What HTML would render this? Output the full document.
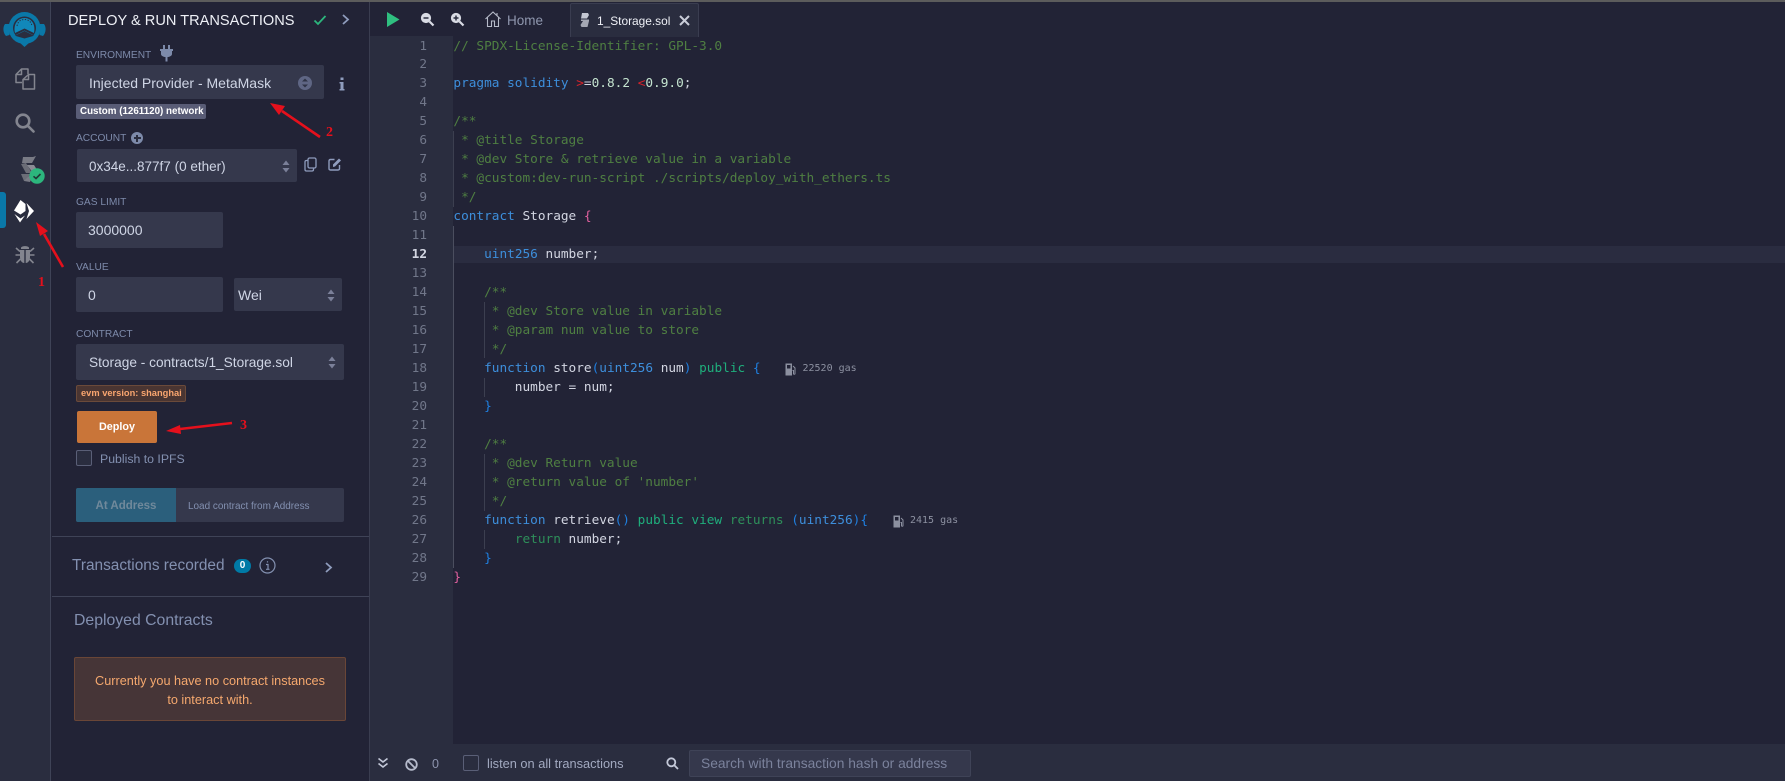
<!DOCTYPE html>
<html><head><meta charset="utf-8"><style>
html,body{margin:0;padding:0;width:1785px;height:781px;overflow:hidden;background:#222336;font-family:"Liberation Sans",sans-serif}
.a{position:absolute}
.t{position:absolute;white-space:pre;line-height:16px}
.lb{font-size:10.2px;color:#7d8aaa;left:76px}
.box{position:absolute;background:#35384c;border-radius:2px}
.v{color:#cfd5e5;font-size:14px}
#code{position:absolute;left:453.4px;top:37.5px;font:12.76px/18.97px "DejaVu Sans Mono","Liberation Mono",monospace;color:#d3d6e2}
#code div{height:18.97px;white-space:pre}
#nums{position:absolute;left:370px;width:57px;top:37.5px;text-align:right;font:12.76px/18.97px "DejaVu Sans Mono","Liberation Mono",monospace;color:#71778a}
#nums div{height:18.97px}
.c{color:#4f7f42}.k{color:#3d8edb}.g{color:#1fae7c}.r{color:#2e8f5a}.b{color:#1f7fe0}.p{color:#e0609e}.e{color:#d8232a}.n{color:#c4e3cf}
.gd{position:absolute;width:1px;background:#3c3f50}
.gas{position:absolute;font:10px/12px "DejaVu Sans Mono",monospace;color:#8c90a0;white-space:pre}
svg{position:absolute;overflow:visible}
.red{position:absolute;color:#e5101c;font:bold 14px/16px "Liberation Serif",serif}
</style></head><body>
<div class="a" style="left:0;top:0;width:1785px;height:781px;background:#222336"></div>
<!-- left icon rail -->
<div class="a" style="left:0;top:0;width:50px;height:781px;background:#2a2d3f"></div>
<div class="a" style="left:50px;top:0;width:1px;height:781px;background:#3f4357"></div>
<div class="a" style="left:369px;top:0;width:1px;height:781px;background:#3a3d50"></div>
<div class="a" style="left:370px;top:36px;width:83px;height:708px;background:#2a2d3f"></div>
<div class="a" style="left:0;top:0;width:1785px;height:1.5px;background:#5c5c5c"></div>

<!-- logo -->
<svg style="left:0;top:0" width="50" height="50" viewBox="0 0 50 50">
<path d="M5 24 C2.500 27 3 33 6 36 L9.500 35 L9 24Z" fill="#0a78a8"/>
<path d="M44 24 C46.500 27 46 33 43 36 L39.500 35 L40 24Z" fill="#0a78a8"/>
<circle cx="24.500" cy="28" r="16" fill="#0a78a8"/>
<circle cx="24.500" cy="28" r="11.500" fill="#2a2d3f"/>
<path d="M15 33 C13 24 18 18 24.500 18 C31 18 36 24 34 33 L24.500 28.500Z" fill="#1188ba"/>
<path d="M17 26 C18 21 21 19.500 24.500 19.500 C28 19.500 31 21 32 26" fill="none" stroke="#2a2d3f" stroke-width="1" stroke-dasharray="1.300 1.500"/>
<path d="M13 36.500 L24.500 30.500 L36 36.500 L24.500 47Z" fill="#0a78a8"/>
<path d="M15 35.800 L24.500 31 L34 35.800 L24.500 38.500Z" fill="#2a2d3f"/>
</svg>
<!-- files -->
<svg style="left:14px;top:67px" width="22" height="24" viewBox="0 0 22 24" fill="none" stroke="#83858f" stroke-width="1.500" stroke-linejoin="round">
<path d="M8 15.500H2 V7.500 L7.500 2 H14 V7"/><path d="M7.500 2V7.500H2"/>
<path d="M9 12.500 L14.500 7.500 H20.500 V22 H9Z"/><path d="M14.500 7.500V12.500H9"/>
</svg>
<!-- search -->
<svg style="left:15px;top:113px" width="20" height="20" viewBox="0 0 20 20" fill="none" stroke="#83858f" stroke-width="2.600">
<circle cx="8" cy="8" r="6.300"/><path d="M12.500 12.500L18.500 18.500" stroke-linecap="round"/>
</svg>
<!-- solidity -->
<svg style="left:18px;top:155px" width="30" height="32" viewBox="0 0 30 32">
<path d="M5 2H15L18 1 14 8 4 8Z" fill="#797b85"/>
<path d="M3 9 L8 18 L14 18 L8 8Z" fill="#6b6d77"/>
<path d="M9 10 H16 L21 18 L15 18Z" fill="#8a8c95"/>
<path d="M3 19 H12 L8 26 H6Z" fill="#6b6d77"/>
<path d="M6 26 L13 19 H15 L12 27 Z" fill="#797b85"/>
<circle cx="19" cy="21" r="7.700" fill="#2cb67d"/>
<path d="M15.500 21.300 L18 23.500 L22.500 19" fill="none" stroke="#1f3a36" stroke-width="1.600"/>
</svg>
<!-- active bar -->
<div class="a" style="left:0;top:192px;width:6px;height:36px;background:#0a78a8;border-radius:0 3px 3px 0"></div>
<!-- deploy icon -->
<svg style="left:0;top:0" width="50" height="240" viewBox="0 0 50 240" fill="#fff">
<path d="M20.500 200 L14 210.500 L20.500 214.500 L25.500 211 L25.500 204Z"/>
<path d="M26.500 203 L34 211 L26.500 219 L29 211Z"/>
<path d="M14.500 214 L20.500 218.500 L25 215.500 L20 222.500Z"/>
</svg>
<!-- bug -->
<svg style="left:15px;top:244px" width="20" height="21" viewBox="0 0 20 21" fill="#83858f">
<path d="M6 4 C6 1.500 14 1.500 14 4 L14 5 H6Z"/>
<path d="M5 6 H9.300 V19 C6.500 19 5 16 5 13Z M10.700 6 H15 V13 C15 16 13.500 19 10.700 19Z"/>
<path d="M1 4 L5 7.500 M19 4 L15 7.500 M0.500 11 H5 M19.500 11 H15 M1.500 19 L5.500 15 M18.500 19 L14.500 15" stroke="#83858f" stroke-width="1.600" fill="none"/>
</svg>

<!-- side panel -->
<div class="t" style="left:68px;top:13px;font-size:14.600px;color:#eef0f6">DEPLOY &amp; RUN TRANSACTIONS</div>
<svg style="left:313px;top:14px" width="14" height="12" viewBox="0 0 14 12"><path d="M1.500 6.500 L5 10 L12.500 2" fill="none" stroke="#2cb67d" stroke-width="1.800"/></svg>
<svg style="left:341px;top:13px" width="9" height="13" viewBox="0 0 9 13"><path d="M2 2 L7 6.500 L2 11" fill="none" stroke="#8f9cbd" stroke-width="1.800"/></svg>

<div class="t lb" style="top:48px">ENVIRONMENT</div>
<svg style="left:160px;top:45px" width="13" height="17" viewBox="0 0 13 17" fill="#7d8aaa"><path d="M3 0H5V4H8V0H10V4H13V6H12V9C12 11 9 12 7.500 12V16.500H5.500V12C4 12 1 11 1 9V6H0V4H3Z"/></svg>
<div class="box" style="left:76px;top:65px;width:248px;height:34px"></div>
<div class="t v" style="left:89px;top:75px">Injected Provider - MetaMask</div>
<svg style="left:297px;top:75px" width="16" height="16" viewBox="0 0 16 16"><circle cx="8" cy="8" r="7" fill="#5f6684"/><path d="M5 6.500L8 3.500 11 6.500ZM5 9.500L8 12.500 11 9.500Z" fill="#2f3346"/></svg>
<svg style="left:339px;top:77px" width="6" height="14" viewBox="0 0 6 14" fill="#8f9cbd"><rect x="1.500" y="0.500" width="3" height="2.500"/><path d="M0.500 5H4.500V12H5.500V13.500H0.500V12H1.500V6.500H0.500Z"/></svg>

<div class="a" style="left:76px;top:104px;width:130px;height:15px;background:#595c76;border-radius:2px"></div>
<div class="t" style="left:80px;top:104px;line-height:15px;font-size:9.800px;font-weight:bold;color:#fff">Custom (1261120) network</div>

<div class="t lb" style="top:131px">ACCOUNT</div>
<div class="a" style="left:131px;top:132px;width:12px;height:12px;border-radius:50%;background:#7d8aaa"></div>
<div class="a" style="left:133.500px;top:137.300px;width:7px;height:1.500px;background:#2a2d3f"></div>
<div class="a" style="left:136.300px;top:134.500px;width:1.500px;height:7px;background:#2a2d3f"></div>
<div class="box" style="left:77px;top:149px;width:220px;height:33px"></div>
<div class="t v" style="left:89px;top:158.500px;font-size:13.500px">0x34e...877f7 (0 ether)</div>
<svg style="left:282px;top:160px" width="8" height="13" viewBox="0 0 8 13" fill="#7b8099"><path d="M4 0.500L7.500 5H0.500ZM4 12.500L7.500 8H0.500Z"/></svg>
<svg style="left:304px;top:157px" width="13" height="15" viewBox="0 0 13 15" fill="none" stroke="#8f9cbd" stroke-width="1.300"><rect x="4" y="1" width="8" height="10" rx="1.500"/><path d="M4 3.500H2.500C1.500 3.500 1 4 1 5V12.500C1 13.500 1.500 14 2.500 14H8C9 14 9.500 13.500 9.500 12.500V11"/></svg>
<svg style="left:328px;top:157px" width="14" height="14" viewBox="0 0 14 14" fill="none" stroke="#8f9cbd" stroke-width="1.400"><path d="M6.500 2.500H2.500C1.500 2.500 1 3 1 4V11.500C1 12.500 1.500 13 2.500 13H10C11 13 11.500 12.500 11.500 11.500V8"/><path d="M5 7.500L11 1.500 13 3.500 7 9.500 5 10Z" fill="#8f9cbd" stroke="none"/></svg>

<div class="t lb" style="top:195px">GAS LIMIT</div>
<div class="box" style="left:76px;top:212px;width:147px;height:36px"></div>
<div class="t v" style="left:88px;top:222px">3000000</div>

<div class="t lb" style="top:260px">VALUE</div>
<div class="box" style="left:76px;top:277px;width:147px;height:35px"></div>
<div class="t v" style="left:88px;top:287px">0</div>
<div class="box" style="left:234px;top:278px;width:108px;height:33px"></div>
<div class="t v" style="left:238px;top:287px">Wei</div>
<svg style="left:327px;top:289px" width="8" height="13" viewBox="0 0 8 13" fill="#7b8099"><path d="M4 0.500L7.500 5H0.500ZM4 12.500L7.500 8H0.500Z"/></svg>

<div class="t lb" style="top:327px">CONTRACT</div>
<div class="box" style="left:76px;top:344px;width:268px;height:36px"></div>
<div class="t v" style="left:89px;top:355px;font-size:13.700px">Storage - contracts/1_Storage.sol</div>
<svg style="left:328px;top:356px" width="8" height="13" viewBox="0 0 8 13" fill="#7b8099"><path d="M4 0.500L7.500 5H0.500ZM4 12.500L7.500 8H0.500Z"/></svg>

<div class="a" style="left:76px;top:385px;width:108px;height:15px;background:#4a3532;border:1px solid #6b4a3a;border-radius:2px"></div>
<div class="t" style="left:81px;top:386px;line-height:15px;font-size:9.300px;font-weight:bold;color:#f9a56f">evm version: shanghai</div>

<div class="a" style="left:77px;top:411px;width:80px;height:32px;background:#c97539;border-radius:2px;text-align:center;font:bold 10.800px/32px 'Liberation Sans',sans-serif;color:#fff">Deploy</div>
<div class="a" style="left:76px;top:450px;width:14px;height:14px;border:1px solid #5a5f77;border-radius:2px;background:#2a2d3f"></div>
<div class="t" style="left:100px;top:451px;font-size:12.300px;color:#8390b0">Publish to IPFS</div>

<div class="box" style="left:76px;top:488px;width:268px;height:34px"></div>
<div class="a" style="left:76px;top:488px;width:100px;height:34px;background:#2b5f7c;border-radius:2px 0 0 2px;text-align:center;font:bold 11.500px/37px 'Liberation Sans',sans-serif;color:#70899b">At Address</div>
<div class="t" style="left:188px;top:498.500px;font-size:9.950px;color:#8390b0">Load contract from Address</div>

<div class="a" style="left:52px;top:536px;width:317px;height:1px;background:#3f4357"></div>
<div class="t" style="left:72px;top:557px;font-size:15.400px;line-height:18px;color:#8390b0">Transactions recorded</div>
<div class="a" style="left:234px;top:559px;width:17px;height:14px;border-radius:8px;background:#007aa6;text-align:center;font:bold 10px/14px 'Liberation Sans',sans-serif;color:#fff">0</div>
<svg style="left:259px;top:557px" width="17" height="17" viewBox="0 0 17 17" fill="none" stroke="#8390b0"><circle cx="8.500" cy="8.500" r="7.500" stroke-width="1.200"/><path d="M7 7.500H9V12M7 12.300H10.500M8.500 4.300V5.500" stroke-width="1.200"/></svg>
<svg style="left:324px;top:561px" width="9" height="13" viewBox="0 0 9 13"><path d="M2 2 L7 6.500 L2 11" fill="none" stroke="#8f9cbd" stroke-width="1.800"/></svg>
<div class="a" style="left:52px;top:596px;width:317px;height:1px;background:#3f4357"></div>
<div class="t" style="left:74px;top:612px;font-size:15.800px;line-height:18px;color:#8390b0">Deployed Contracts</div>
<div class="a" style="left:74px;top:657px;width:270px;height:62px;background:#463537;border:1px solid #6a4637;border-radius:2px"></div>
<div class="t" style="left:74px;width:272px;top:672px;text-align:center;font-size:12.700px;line-height:19px;color:#f5a86e">Currently you have no contract instances
to interact with.</div>

<!-- tab bar -->
<svg style="left:387px;top:12px" width="13" height="15" viewBox="0 0 13 15"><path d="M0 0 L12.500 7.500 L0 15Z" fill="#2fbf80"/></svg>
<svg style="left:420px;top:12px" width="15" height="15" viewBox="0 0 15 15" fill="none"><circle cx="6" cy="6" r="4.600" fill="#d9dbe4" stroke="#d9dbe4"/><path d="M9.500 9.500L13.500 13.500" stroke="#d9dbe4" stroke-width="2.200"/><path d="M3.500 6H8.500" stroke="#2a2d3f" stroke-width="1.500"/></svg>
<svg style="left:450px;top:12px" width="15" height="15" viewBox="0 0 15 15" fill="none"><circle cx="6" cy="6" r="4.600" fill="#d9dbe4" stroke="#d9dbe4"/><path d="M9.500 9.500L13.500 13.500" stroke="#d9dbe4" stroke-width="2.200"/><path d="M3.500 6H8.500M6 3.500V8.500" stroke="#2a2d3f" stroke-width="1.500"/></svg>
<svg style="left:485px;top:11px" width="16" height="16" viewBox="0 0 16 16" fill="none" stroke="#b6bbc9" stroke-width="1.100"><path d="M0.500 8 L8 1 L15.500 8 M2.500 6.500V15.500H6.500V10H9.500V15.500H13.500V6.500"/><path d="M12 2V4.500"/></svg>
<div class="t" style="left:507px;top:13px;font-size:13.500px;color:#8f97ae">Home</div>
<div class="a" style="left:570px;top:3px;width:127px;height:33px;background:#2a2d3f;border:1px solid #3a3d50;border-bottom:none;border-radius:2px 2px 0 0"></div>
<svg style="left:580px;top:13px" width="10" height="14" viewBox="0 0 10 14" fill="#c4c7d2"><path d="M2 0H8L9 2 7 5.500H1Z"/><path d="M1 6.500H9V8 L7.500 14H1.500L0.500 12 3 8H1Z" fill="#a4a7b3"/></svg>
<div class="t" style="left:597px;top:13px;font-size:11.900px;color:#eef0f6">1_Storage.sol</div>
<svg style="left:679px;top:15px" width="11" height="11" viewBox="0 0 11 11"><path d="M1 1L10 10M10 1L1 10" stroke="#c9cdd8" stroke-width="2"/></svg>

<!-- editor -->
<div class="a" style="left:454px;top:246px;width:1331px;height:17px;background:#2a2c40"></div>
<div class="gd" style="left:453px;top:131px;height:76px"></div>
<div class="gd" style="left:453px;top:226px;height:342px;background:#4b4e5f"></div>
<div class="gd" style="left:484px;top:302px;height:56px"></div>
<div class="gd" style="left:484px;top:378px;height:19px"></div>
<div class="gd" style="left:484px;top:454px;height:57px"></div>
<div class="gd" style="left:484px;top:530px;height:19px"></div>
<div id="nums"><div>1</div><div>2</div><div>3</div><div>4</div><div>5</div><div>6</div><div>7</div><div>8</div><div>9</div><div>10</div><div>11</div><div style="color:#d3d6e2;font-weight:bold">12</div><div>13</div><div>14</div><div>15</div><div>16</div><div>17</div><div>18</div><div>19</div><div>20</div><div>21</div><div>22</div><div>23</div><div>24</div><div>25</div><div>26</div><div>27</div><div>28</div><div>29</div></div>
<div id="code">
<div class="c">// SPDX-License-Identifier: GPL-3.0</div>
<div> </div>
<div><span class="k">pragma solidity</span> <span class="e">&gt;</span>=<span class="n">0.8.2</span> <span class="e">&lt;</span><span class="n">0.9.0</span>;</div>
<div> </div>
<div class="c">/**</div>
<div class="c"> * @title Storage</div>
<div class="c"> * @dev Store &amp; retrieve value in a variable</div>
<div class="c"> * @custom:dev-run-script ./scripts/deploy_with_ethers.ts</div>
<div class="c"> */</div>
<div><span class="k">contract</span> Storage <span class="p">{</span></div>
<div> </div>
<div>    <span class="k">uint256</span> number;</div>
<div> </div>
<div class="c">    /**</div>
<div class="c">     * @dev Store value in variable</div>
<div class="c">     * @param num value to store</div>
<div class="c">     */</div>
<div>    <span class="k">function</span> store<span class="b">(</span><span class="k">uint256</span> num<span class="b">)</span> <span class="g">public</span> <span class="b">{</span></div>
<div>        number = num;</div>
<div>    <span class="b">}</span></div>
<div> </div>
<div class="c">    /**</div>
<div class="c">     * @dev Return value</div>
<div class="c">     * @return value of 'number'</div>
<div class="c">     */</div>
<div>    <span class="k">function</span> retrieve<span class="b">()</span> <span class="g">public view</span> <span class="r">returns</span> <span class="b">(</span><span class="k">uint256</span><span class="b">){</span></div>
<div>        <span class="r">return</span> number;</div>
<div>    <span class="b">}</span></div>
<div><span class="p">}</span></div>
</div>
<svg style="left:785px;top:363px" width="11" height="13" viewBox="0 0 11 13" fill="#8c90a0"><path d="M0.500 0.500H7V12.500H0.500ZM2 2V5.500H5.500V2Z" fill-rule="evenodd"/><path d="M8 3L10 5V10.500C10 11.500 8.500 11.500 8.500 10.500V7.500H7.500" fill="none" stroke="#8c90a0"/></svg>
<div class="gas" style="left:802.500px;top:363px">22520 gas</div>
<svg style="left:893px;top:515px" width="11" height="13" viewBox="0 0 11 13" fill="#8c90a0"><path d="M0.500 0.500H7V12.500H0.500ZM2 2V5.500H5.500V2Z" fill-rule="evenodd"/><path d="M8 3L10 5V10.500C10 11.500 8.500 11.500 8.500 10.500V7.500H7.500" fill="none" stroke="#8c90a0"/></svg>
<div class="gas" style="left:910px;top:515px">2415 gas</div>

<!-- footer -->
<div class="a" style="left:370px;top:744px;width:1415px;height:37px;background:#2a2d3f"></div>
<svg style="left:377px;top:757px" width="12" height="12" viewBox="0 0 12 12" fill="none" stroke="#c3c8d8" stroke-width="1.600"><path d="M1.500 1.500L6 5 10.500 1.500M1.500 6.500L6 10 10.500 6.500"/></svg>
<svg style="left:405px;top:758px" width="13" height="13" viewBox="0 0 13 13" fill="none" stroke="#b5bacb" stroke-width="1.800"><circle cx="6.500" cy="6.500" r="5.300"/><path d="M3 3L10 10"/></svg>
<div class="t" style="left:432px;top:756px;font-size:12.500px;color:#8d94ae">0</div>
<div class="a" style="left:463px;top:755px;width:14px;height:14px;border:1px solid #5a5f77;border-radius:2px"></div>
<div class="t" style="left:487px;top:756px;font-size:12.800px;color:#a2a9c0">listen on all transactions</div>
<svg style="left:666px;top:757px" width="13" height="13" viewBox="0 0 13 13" fill="none" stroke="#c3c8d8" stroke-width="1.800"><circle cx="5.300" cy="5.300" r="4"/><path d="M8.300 8.300L12 12"/></svg>
<div class="a" style="left:689px;top:750px;width:280px;height:25px;background:#35384c;border:1px solid #3f4357;border-radius:2px"></div>
<div class="t" style="left:701px;top:756px;font-size:13.800px;color:#7b829c">Search with transaction hash or address</div>

<!-- annotations -->
<svg style="left:0;top:0" width="1785" height="781" viewBox="0 0 1785 781">
<path d="M63 267 L44 234" stroke="#e5101c" stroke-width="2.600"/><path d="M36 222 L48 231 L40 236Z" fill="#e5101c"/>
<path d="M320 137 L282 111" stroke="#e5101c" stroke-width="2.600"/><path d="M270 103 L285 106 L279 115Z" fill="#e5101c"/>
<path d="M232 423 L180 429" stroke="#e5101c" stroke-width="2.600"/><path d="M166 431 L180 425 L181 434Z" fill="#e5101c"/>
</svg>
<div class="red" style="left:38px;top:275px">1</div>
<div class="red" style="left:326px;top:125px">2</div>
<div class="red" style="left:240px;top:418px">3</div>
</body></html>
